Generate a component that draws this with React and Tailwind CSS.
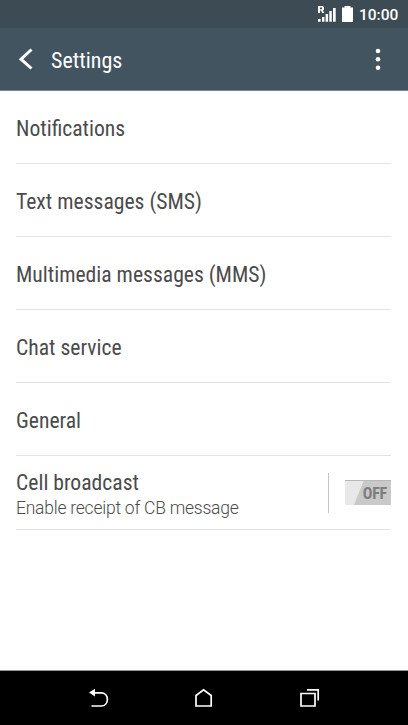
const items = ["Notifications", "Text messages (SMS)", "Multimedia messages (MMS)", "Chat service", "General"];

function StatusBar() {
  return (
    <div className="flex h-7 items-center bg-[#3d4b54] text-white">
      <svg className="ml-[317px] h-7 w-[36px] shrink-0" viewBox="317 0 36 28" fill="currentColor">
        <path fillRule="evenodd" d="M318 6h4.700l1.300 1v2.500l-1 1 1.300 2.500h-2.100l-1.200-2.400h-1V13H318zM320 7.500v1.700h2V7.500z" />
        <path d="M318 19h2.600v2.800H318zM322 17h2.400v4.800H322zM325.600 14h2.500v7.800h-2.500zM329.300 11h2.500v10.800h-2.500zM333 8h2.700v13.800h-2.700zM342 7.500h2.500V6h6v1.500h2.500V22h-11z" />
      </svg>
      <span className="ml-[6px] mt-[2px] whitespace-nowrap font-[Roboto] text-[15.5px] font-medium leading-7">10:00</span>
    </div>
  );
}

function Header() {
  return (
    <header className="flex h-[63px] items-center border-b border-[#7b8791] bg-[#435461] text-white">
      <svg className="ml-[18px] h-6 w-4" viewBox="18 47.500 16 24" fill="none" stroke="currentColor" strokeWidth="3">
        <path d="M31.500 50L21 59.700L31.500 69" />
      </svg>
      <h1 className="ml-[17px] mt-1 text-[22px] leading-7 [font-stretch:75%]">Settings</h1>
      <svg className="ml-auto mr-[25px] h-6 w-[10px]" viewBox="373 47 10 24" fill="currentColor">
        <circle cx="378" cy="51" r="2.300" />
        <circle cx="378" cy="59.300" r="2.300" />
        <circle cx="378" cy="67.800" r="2.300" />
      </svg>
    </header>
  );
}

function Toggle() {
  return (
    <div className="relative flex h-[25px] w-[46px] items-center justify-end border-t border-[#b8b8b8] bg-[#c9c9c9] pr-1">
      <svg className="absolute inset-0 h-6 w-[46px]" viewBox="0 0 46 24">
        <path d="M0 0H18.500L9 24H0z" fill="#e8e8e8" />
      </svg>
      <span className="relative mt-px text-[16px] font-bold leading-6 tracking-[-0.2px] text-[#7d7d7d] [font-stretch:75%]">OFF</span>
    </div>
  );
}

function NavBar() {
  return (
    <nav className="h-[55px] border-t border-[#8f9694] bg-black">
      <svg className="h-[54px] w-full" viewBox="0 671 408 54" fill="none" stroke="#fff" strokeWidth="1.700">
        <path d="M91.500 706H101C109.500 706 109.500 692.800 101 692.800H94" />
        <path d="M89 692.600L95 688.800V696.400z" fill="#fff" stroke="none" />
        <path d="M196 706V695.500L203.600 689.800L211.200 695.500V706z" />
        <path d="M301 693.500H315V706H301zM307 689.900H318.200V700.500" />
      </svg>
    </nav>
  );
}

export default function App() {
  return (
    <div className="flex h-[725px] w-[408px] flex-col overflow-hidden bg-white font-['Roboto_Condensed',Roboto,sans-serif] text-[#4b4b4b]">
      <StatusBar />
      <Header />
      <main className="flex-1 pl-4 pr-[17px]">
        {items.map((item) => (
          <div key={item} className="flex h-[73px] items-center border-b border-[#e3e3e3]">
            <span className="mt-[3px] text-[21.65px] leading-7 [font-stretch:75%]">{item}</span>
          </div>
        ))}
        <div className="flex h-[74px] items-center border-b border-[#e3e3e3]">
          <div className="pt-[3px]">
            <div className="text-[21.65px] leading-7 [font-stretch:75%]">Cell broadcast</div>
            <div className="font-[Roboto] text-[17.5px] font-light leading-[23px] tracking-[-0.23px]">Enable receipt of CB message</div>
          </div>
          <div className="ml-auto mr-4 h-10 w-px bg-[#c4c4c4]" />
          <Toggle />
        </div>
      </main>
      <NavBar />
    </div>
  );
}
